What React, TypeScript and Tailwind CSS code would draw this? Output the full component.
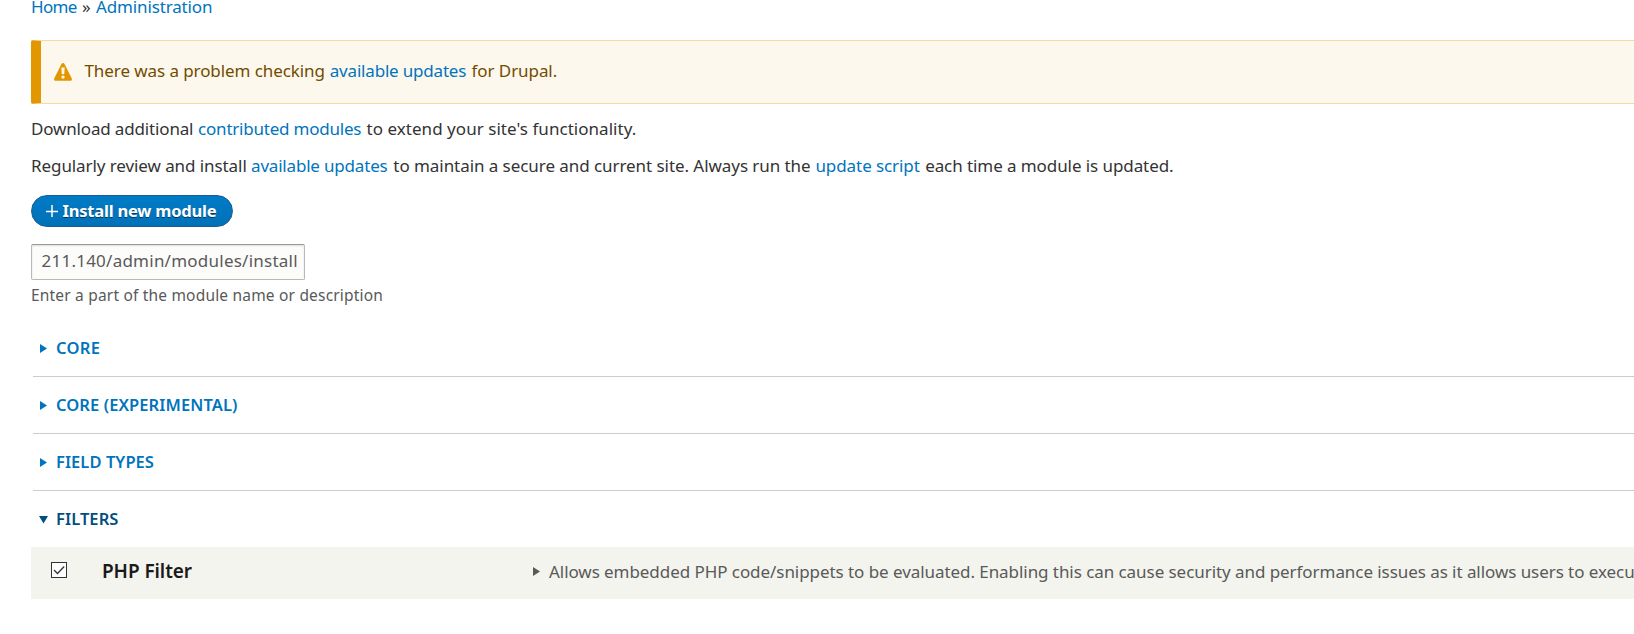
import type { ReactNode } from "react";

function Link({ children, className = "" }: { children: ReactNode; className?: string }) {
  return (
    <a href="#" className={`text-[#0074bd] ${className}`}>
      {children}
    </a>
  );
}

function WarningIcon() {
  return (
    <svg width="18" height="18" viewBox="0 0 18 18" className="mt-[22px] ml-[13px] shrink-0">
      <path
        d="M9 0C8.3 0 7.8.4 7.5 1L.3 15.2C-.3 16.5.4 17.8 1.8 17.8h14.4c1.4 0 2.1-1.3 1.5-2.6L10.500 1C10.200.4 9.700 0 9 0z"
        fill="#e29700"
      />
      <path d="M7.300 4.500h3.400l-.5 6.800H7.800z" fill="#fdf8ed" />
      <circle cx="9" cy="14.100" r="1.700" fill="#fdf8ed" />
    </svg>
  );
}

function ArrowRight({ className }: { className: string }) {
  return (
    <svg width="7" height="9" viewBox="0 0 7 9" className={className}>
      <path d="M0 0v9l7-4.500z" fill="currentColor" />
    </svg>
  );
}

function Group({ title, className }: { title: string; className: string }) {
  return (
    <div className="ml-[2px] flex h-[57px] border-b border-[#ccc] pt-4 pl-[7px] text-[#0074bd]">
      <ArrowRight className="mt-2 mr-[9px] shrink-0" />
      <span className={`text-[16.5px] leading-6 font-semibold ${className}`}>{title}</span>
    </div>
  );
}

export default function App() {
  return (
    <div className="h-[634px] overflow-hidden bg-white pl-[31px] font-['Noto_Sans',sans-serif] text-[17px] leading-6 whitespace-nowrap text-[#333]">
      <nav className="flex h-10 leading-[14px]">
        <Link className="w-[51px] tracking-[-0.7px]">Home</Link>
        <span className="w-[14px]">»</span>
        <Link className="tracking-[-0.14px]">Administration</Link>
      </nav>

      <div className="flex h-16 rounded-l-[2px] border-y border-l-[10px] border-y-[#f4daa6] border-l-[#e29700] bg-[#fdf8ed] text-[#734c00]">
        <WarningIcon />
        <p className="mt-[18px] ml-[12.5px] tracking-[-0.08px]">
          There was a problem checking <Link className="mr-px ml-[0.5px] tracking-[-0.19px]">available updates</Link> for
          Drupal.
        </p>
      </div>

      <p className="mt-[13px] tracking-[-0.16px]">
        Download additional <Link className="mr-px ml-[0.5px] tracking-[-0.22px]">contributed modules</Link>{" "}
        <span className="tracking-[0.04px]">to extend your site's functionality.</span>
      </p>
      <p className="mt-[13px] tracking-[-0.08px]">
        Regularly review and install <Link className="mr-[1.5px] tracking-[-0.19px]">available updates</Link>{" "}
        <span className="tracking-[-0.06px]">to maintain a secure and current site. Always run the</span>{" "}
        <Link className="mr-px ml-[0.5px]">update script</Link> each time a module is updated.
      </p>

      <a
        href="#"
        className="mt-[17px] flex h-8 w-[202px] items-center rounded-full border border-[#1e5c90] bg-linear-to-b from-[#007bc6] to-[#0071b8] pl-[14px] text-[16.5px] font-bold tracking-[-0.2px] text-white [text-shadow:0_1px_#00000080]"
      >
        <svg width="12" height="12" viewBox="0 0 12 12" className="mr-[4.5px] shrink-0">
          <path d="M6 0v12M0 6.500h12" stroke="white" strokeWidth="1.500" />
        </svg>
        Install new module
      </a>

      <div className="mt-[17px] flex h-9 w-[274px] items-center rounded-[2px] border border-[#b8b8b8] border-t-[#999] bg-[#fcfcfa] pb-[2px] pl-[9.5px] tracking-[0.24px] text-[#595959] shadow-[inset_0_1px_2px_rgba(0,0,0,0.125)]">
        211.140/admin/modules/install
      </div>
      <p className="mt-[3px] text-[15.5px] tracking-[0.19px] text-[#595959]">
        Enter a part of the module name or description
      </p>

      <div className="mt-[13px]">
        <Group title="CORE" className="tracking-[0.3px]" />
        <Group title="CORE (EXPERIMENTAL)" className="tracking-[0.09px]" />
        <Group title="FIELD TYPES" className="tracking-[0.06px]" />
        <div className="flex h-14 pt-4 pl-2 text-[#004f80]">
          <svg width="9" height="8" viewBox="0 0 9 8" className="mt-[9px] mr-2 shrink-0">
            <path d="M0 0h9L4.500 7.500z" fill="currentColor" />
          </svg>
          <span className="text-[16.5px] font-semibold tracking-[0.08px]">FILTERS</span>
        </div>
      </div>

      <div className="flex h-[52px] bg-[#f3f4ee]">
        <span className="mt-[15px] ml-5 flex size-4 shrink-0 items-center justify-center border border-[#333] bg-white">
          <svg width="12" height="10" viewBox="0 0 12 10">
            <path d="M1 5l3.500 3.500L11.200 1.500" fill="none" stroke="#333" strokeWidth="1.300" />
          </svg>
        </span>
        <span className="mt-3 ml-[35px] w-[431px] shrink-0 text-[19px] font-semibold tracking-[-0.07px] text-[#1a1a1a]">
          PHP Filter
        </span>
        <ArrowRight className="mt-5 shrink-0 text-[#595959]" />
        <span className="mt-[13px] ml-[9px] tracking-[-0.06px] text-[#595959]">
          Allows embedded PHP code/snippets to be evaluated. Enabling this can cause security and performance issues as
          it allows users to execute
        </span>
      </div>
    </div>
  );
}
